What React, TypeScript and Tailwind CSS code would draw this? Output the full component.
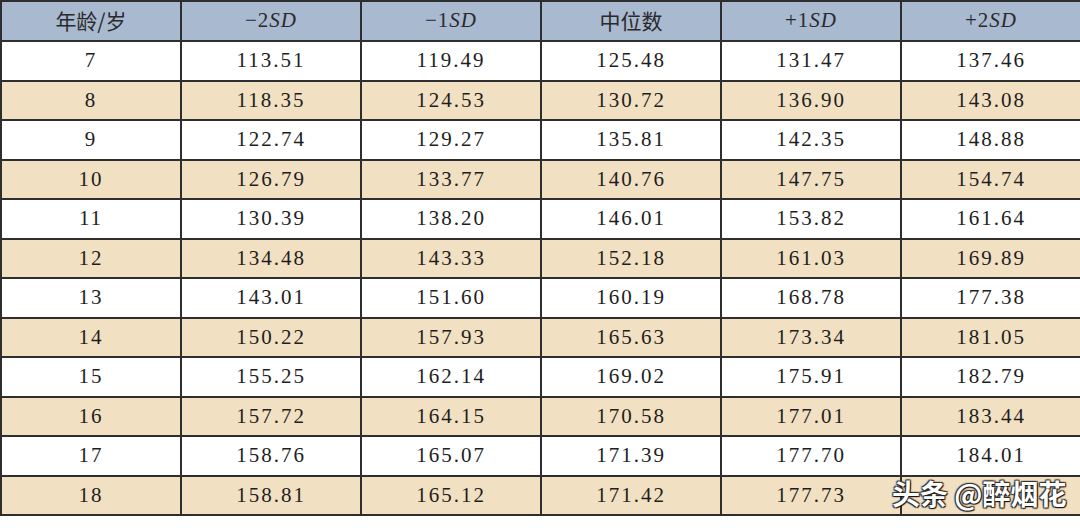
import React from 'react';

const rows: [number, string, string, string, string, string][] = [
  [7, '113.51', '119.49', '125.48', '131.47', '137.46'],
  [8, '118.35', '124.53', '130.72', '136.90', '143.08'],
  [9, '122.74', '129.27', '135.81', '142.35', '148.88'],
  [10, '126.79', '133.77', '140.76', '147.75', '154.74'],
  [11, '130.39', '138.20', '146.01', '153.82', '161.64'],
  [12, '134.48', '143.33', '152.18', '161.03', '169.89'],
  [13, '143.01', '151.60', '160.19', '168.78', '177.38'],
  [14, '150.22', '157.93', '165.63', '173.34', '181.05'],
  [15, '155.25', '162.14', '169.02', '175.91', '182.79'],
  [16, '157.72', '164.15', '170.58', '177.01', '183.44'],
  [17, '158.76', '165.07', '171.39', '177.70', '184.01'],
  // last value sits under the watermark
  [18, '158.81', '165.12', '171.42', '177.73', ''],
];

const serif = "font-['Liberation_Serif',serif]";
const cjk = "font-['Noto_Sans_CJK_SC',sans-serif]";

const HeadCell = ({children, cn = ''}: {children: React.ReactNode; cn?: string}) => (
  <div
    className={`h-[40px] flex items-center justify-center bg-[#a9b9d0] border-r-2 border-b-2 border-[#2e2e2e] text-[#2a2a2a] ${cn}`}
  >
    {children}
  </div>
);

const Sd = ({sign}: {sign: string}) => (
  <span className={`${serif} text-[21px] tracking-[1px]`}>
    {sign}
    <i>SD</i>
  </span>
);

export default function App() {
  return (
    <div className="w-[1080px] h-[530px] bg-white relative overflow-hidden font-serif">
      <div className="grid grid-cols-6 border-l-2 border-t-2 border-[#2e2e2e] w-[1082px]">
        <HeadCell cn={`${cjk} text-[21px]`}>年龄/岁</HeadCell>
        <HeadCell>
          <Sd sign="−2" />
        </HeadCell>
        <HeadCell>
          <Sd sign="−1" />
        </HeadCell>
        <HeadCell cn={`${cjk} text-[21px]`}>中位数</HeadCell>
        <HeadCell>
          <Sd sign="+1" />
        </HeadCell>
        <HeadCell>
          <Sd sign="+2" />
        </HeadCell>
        {rows.map((r, i) =>
          r.map((v, j) => (
            <div
              key={`${i}-${j}`}
              className={`h-[39.5px] flex items-center justify-center border-r-2 border-b-2 border-[#2e2e2e] text-[21px] text-[#1e1e1e] ${serif} tracking-[2px] ${
                i % 2 === 1 ? 'bg-[#f2e0c2]' : 'bg-white'
              }`}
            >
              {v}
            </div>
          )),
        )}
      </div>
      <div
        className={`absolute left-[892px] top-[476px] text-white text-[28px] leading-[34px] font-bold ${cjk} [text-shadow:1px_1px_1px_#111,-1px_-1px_1px_#333,1px_-1px_1px_#333,-1px_1px_1px_#333]`}
      >
        头条 @醉烟花
      </div>
    </div>
  );
}
